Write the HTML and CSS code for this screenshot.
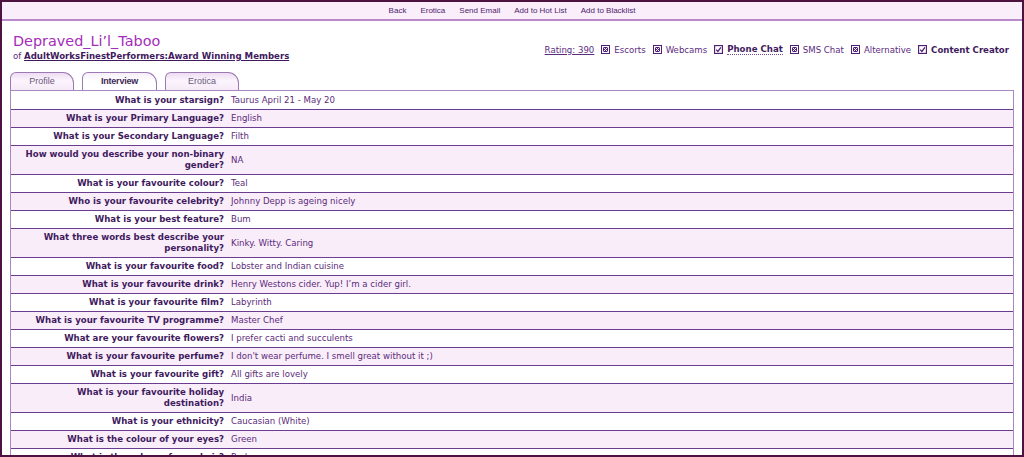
FILE: index.html
```html
<!DOCTYPE html>
<html>
<head>
<meta charset="utf-8">
<link rel="stylesheet" href="styles.css">
</head>
<body>
<div class="frame">
  <div class="nav">
    <a href="#">Back</a>
    <a href="#">Erotica</a>
    <a href="#">Send Email</a>
    <a href="#">Add to Hot List</a>
    <a href="#">Add to Blacklist</a>
  </div>
  <div class="main">
    <div class="header">
      <div class="ident">
        <div class="title">Depraved_Li’l_Taboo</div>
        <div class="sub">of <a href="#">AdultWorksFinestPerformers:Award Winning Members</a></div>
      </div>
      <div class="flags">
        <a class="rating" href="#">Rating: 390</a>
        <span class="flag"><svg class="cb" viewBox="0 0 9 9"><rect x="0" y="0" width="9" height="9" fill="#4e1f72"/><rect x="1.5" y="1.5" width="6" height="6" fill="none" stroke="#fff" stroke-width="1"/><path d="M2.5 2.5 L6.5 6.5 M6.5 2.5 L2.5 6.5" stroke="#fff" stroke-width="1"/></svg>Escorts</span>
        <span class="flag"><svg class="cb" viewBox="0 0 9 9"><rect x="0" y="0" width="9" height="9" fill="#4e1f72"/><rect x="1.5" y="1.5" width="6" height="6" fill="none" stroke="#fff" stroke-width="1"/><path d="M2.5 2.5 L6.5 6.5 M6.5 2.5 L2.5 6.5" stroke="#fff" stroke-width="1"/></svg>Webcams</span>
        <span class="flag on"><svg class="cb" viewBox="0 0 9 9"><rect x="0.5" y="0.5" width="8" height="8" fill="#fff" stroke="#4e1f72" stroke-width="1.3"/><path d="M2.2 4.6 L3.9 6.4 L6.9 2.4" fill="none" stroke="#4e1f72" stroke-width="1.3"/></svg><span class="dot">Phone Chat</span></span>
        <span class="flag"><svg class="cb" viewBox="0 0 9 9"><rect x="0" y="0" width="9" height="9" fill="#4e1f72"/><rect x="1.5" y="1.5" width="6" height="6" fill="none" stroke="#fff" stroke-width="1"/><path d="M2.5 2.5 L6.5 6.5 M6.5 2.5 L2.5 6.5" stroke="#fff" stroke-width="1"/></svg>SMS Chat</span>
        <span class="flag"><svg class="cb" viewBox="0 0 9 9"><rect x="0" y="0" width="9" height="9" fill="#4e1f72"/><rect x="1.5" y="1.5" width="6" height="6" fill="none" stroke="#fff" stroke-width="1"/><path d="M2.5 2.5 L6.5 6.5 M6.5 2.5 L2.5 6.5" stroke="#fff" stroke-width="1"/></svg>Alternative</span>
        <span class="flag on"><svg class="cb" viewBox="0 0 9 9"><rect x="0.5" y="0.5" width="8" height="8" fill="#fff" stroke="#4e1f72" stroke-width="1.3"/><path d="M2.2 4.6 L3.9 6.4 L6.9 2.4" fill="none" stroke="#4e1f72" stroke-width="1.3"/></svg>Content Creator</span>
      </div>
    </div>
    <div class="tabs">
      <div class="tab t1">Profile</div>
      <div class="tab t2 active">Interview</div>
      <div class="tab t3">Erotica</div>
    </div>
    <div class="box">
      <table class="qa">
        <tr><th>What is your starsign?</th><td>Taurus April 21 - May 20</td></tr>
        <tr><th>What is your Primary Language?</th><td>English</td></tr>
        <tr><th>What is your Secondary Language?</th><td>Filth</td></tr>
        <tr><th>How would you describe your non-binary gender?</th><td>NA</td></tr>
        <tr><th>What is your favourite colour?</th><td>Teal</td></tr>
        <tr><th>Who is your favourite celebrity?</th><td>Johnny Depp is ageing nicely</td></tr>
        <tr><th>What is your best feature?</th><td>Bum</td></tr>
        <tr><th>What three words best describe your personality?</th><td>Kinky. Witty. Caring</td></tr>
        <tr><th>What is your favourite food?</th><td>Lobster and Indian cuisine</td></tr>
        <tr><th>What is your favourite drink?</th><td>Henry Westons cider. Yup! I’m a cider girl.</td></tr>
        <tr><th>What is your favourite film?</th><td>Labyrinth</td></tr>
        <tr><th>What is your favourite TV programme?</th><td>Master Chef</td></tr>
        <tr><th>What are your favourite flowers?</th><td>I prefer cacti and succulents</td></tr>
        <tr><th>What is your favourite perfume?</th><td>I don't wear perfume. I smell great without it ;)</td></tr>
        <tr><th>What is your favourite gift?</th><td>All gifts are lovely</td></tr>
        <tr><th>What is your favourite holiday destination?</th><td>India</td></tr>
        <tr><th>What is your ethnicity?</th><td>Caucasian (White)</td></tr>
        <tr><th>What is the colour of your eyes?</th><td>Green</td></tr>
        <tr><th>What is the colour of your hair?</th><td>Red</td></tr>
      </table>
    </div>
  </div>
</div>
</body>
</html>
```

FILE: styles.css
```css
html, body {
  margin: 0;
  padding: 0;
  background: #fff;
}
.frame {
  width: 1024px;
  height: 457px;
  box-sizing: border-box;
  border: 2px solid #4d1240;
  overflow: hidden;
  font-family: "DejaVu Sans", Verdana, sans-serif;
}
.nav {
  height: 17px;
  background: #fbeefb;
  border-bottom: 2px solid #b88ac9;
  display: flex;
  justify-content: center;
  align-items: center;
  gap: 14px;
  font-family: "Liberation Sans", Arial, sans-serif;
  font-size: 8px;
}
.nav a {
  color: #4b1d6b;
  text-decoration: none;
}
.main {
  padding: 0 8px;
}
.header {
  height: 51px;
  display: flex;
  justify-content: space-between;
  align-items: center;
  padding: 0 3px;
}
.ident {
  padding-top: 1px;
}
.title {
  font-size: 14.4px;
  line-height: 18px;
  color: #a52cba;
}
.sub {
  font-size: 8.6px;
  line-height: 12px;
  color: #5b2b80;
}
.sub a {
  color: #3f1a5e;
  font-weight: bold;
  text-decoration: underline;
}
.flags {
  display: flex;
  align-items: center;
  gap: 7px;
  font-size: 8.6px;
  color: #5b2b80;
  padding-top: 6px;
  padding-right: 2px;
}
.rating {
  color: #5b2b80;
  text-decoration: underline;
}
.flag {
  display: flex;
  align-items: center;
  gap: 4px;
}
.flag.on {
  font-weight: bold;
  color: #3f1a5e;
}
.dot {
  border-bottom: 1px dotted #7a4a9a;
}
.cb {
  width: 9px;
  height: 9px;
  display: block;
}
.tabs {
  display: flex;
  gap: 8px;
  height: 18px;
  align-items: flex-end;
}
.tab {
  height: 18px;
  box-sizing: border-box;
  border: 1px solid #9d7ab5;
  border-bottom: none;
  border-radius: 6px 11px 0 0;
  background: linear-gradient(#eedcf2, #fbf4fc 45%, #f6eaf8);
  font-family: "Liberation Sans", Arial, sans-serif;
  font-size: 9px;
  line-height: 17px;
  text-align: center;
  color: #6a5a7e;
}
.t1 { width: 64px; }
.t2 { width: 75px; }
.t3 { width: 74px; }
.tab.active {
  background: linear-gradient(#f7eef9, #ffffff 50%);
  font-weight: bold;
  color: #3f2a55;
  letter-spacing: -0.2px;
}
.box {
  border: 1px solid #a888bf;
  border-bottom: none;
  padding-top: 1px;
}
.qa {
  width: 100%;
  border-collapse: collapse;
  font-size: 8.6px;
  line-height: 11px;
}
.qa tr {
  border-bottom: 1px solid #6b3d90;
}
.qa tr:nth-child(even) {
  background: #f9edfa;
}
.qa th {
  width: 205px;
  text-align: right;
  font-weight: bold;
  color: #3f1a5e;
  padding: 3px 3px 3px 8px;
  vertical-align: middle;
}
.qa td {
  text-align: left;
  color: #5b2b7b;
  padding: 3px 4px;
  vertical-align: middle;
}
```
